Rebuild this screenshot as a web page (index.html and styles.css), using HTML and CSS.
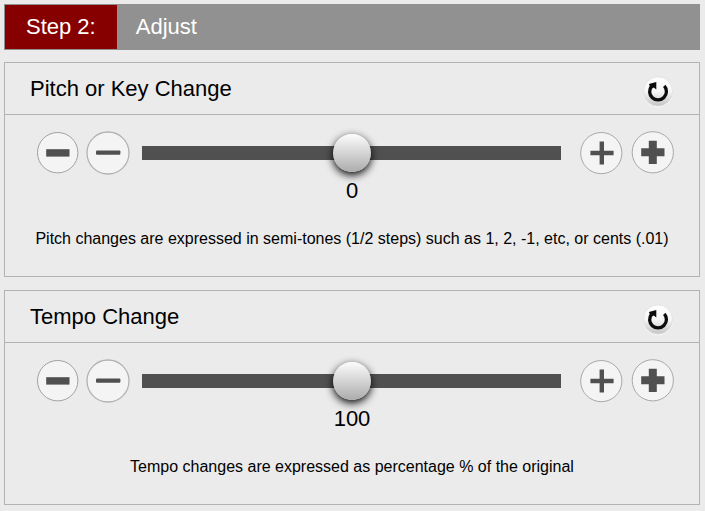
FILE: index.html
```html
<!DOCTYPE html>
<html lang="en">
<head>
    <meta charset="UTF-8">
    <meta name="viewport" content="width=device-width, initial-scale=1.0">
    <title>Adjust Pitch and Tempo</title>
    <link rel="stylesheet" href="styles.css">
</head>
<body>
    <!-- Shared icons -->
    <svg class="icon-defs" aria-hidden="true">
        <defs>
            <linearGradient id="resetFill" x1="0" y1="0" x2="0" y2="1">
                <stop offset="0" stop-color="#ffffff"/>
                <stop offset="0.5" stop-color="#f6f6f6"/>
                <stop offset="1" stop-color="#c4c4c4"/>
            </linearGradient>
        </defs>
        <symbol id="minusBold" viewBox="0 0 42 42">
            <circle cx="20.7" cy="20.7" r="20.2" fill="#f4f4f4" stroke="#a0a0a0"/>
            <rect x="9.2" y="17.2" width="23.3" height="7.4" fill="#505050"/>
        </symbol>
        <symbol id="minusThin" viewBox="0 0 42 42">
            <circle cx="21" cy="21" r="21" fill="#f4f4f4" stroke="#b2b2b2" stroke-width="1.3"/>
            <rect x="9" y="18.4" width="24.4" height="4.4" rx="1" fill="#505050"/>
        </symbol>
        <symbol id="plusThin" viewBox="0 0 42 42">
            <circle cx="21.3" cy="21.1" r="20.6" fill="#f4f4f4" stroke="#a8a8a8"/>
            <path d="M19.6 9.6h4.4v9.2h9.6v4.4h-9.6v9.2h-4.4v-9.2h-9.2v-4.4h9.2z" fill="#505050"/>
        </symbol>
        <symbol id="plusBold" viewBox="0 0 42 42">
            <circle cx="20.8" cy="20.3" r="20.6" fill="#f4f4f4" stroke="#a8a8a8"/>
            <path d="M16.8 8.7h8v7.6h7.7v8h-7.7v7.6h-8v-7.6h-7.6v-8h7.6z" fill="#505050"/>
        </symbol>
        <symbol id="reset" viewBox="0 0 32 32">
            <circle cx="16" cy="16.3" r="15.2" fill="#f3f3f3"/>
            <circle cx="16" cy="15.4" r="14.6" fill="url(#resetFill)" stroke="#dadada" stroke-width="0.7"/>
            <path d="M22.3 9.9A8.4 8.4 0 1 1 9.6 10.1" fill="none" stroke="#0c0c0c" stroke-width="3.3"/>
            <path d="M6.9 8.1L14.3 6V13.4L11.8 11.4L9 13z" fill="#0c0c0c"/>
        </symbol>
    </svg>

    <header class="step-bar">
        <span class="step-number">Step 2:</span>
        <span class="step-title">Adjust</span>
    </header>

    <section class="panel">
        <div class="panel-header">
            <label class="panel-title" for="pitch">Pitch or Key Change</label>
            <button class="reset-btn" data-target="pitch" data-value="0" aria-label="Reset pitch"><svg><use href="#reset"/></svg></button>
        </div>
        <div class="panel-body">
            <div class="controls">
                <div class="buttons buttons-down">
                    <button class="round-btn" data-target="pitch" data-step="-1" aria-label="Pitch down"><svg><use href="#minusBold"/></svg></button>
                    <button class="round-btn" data-target="pitch" data-step="-0.01" aria-label="Pitch down slightly"><svg><use href="#minusThin"/></svg></button>
                </div>
                <input type="range" class="slider" id="pitch" min="-12" max="12" step="0.01" value="0">
                <div class="buttons buttons-up">
                    <button class="round-btn" data-target="pitch" data-step="0.01" aria-label="Pitch up slightly"><svg><use href="#plusThin"/></svg></button>
                    <button class="round-btn" data-target="pitch" data-step="1" aria-label="Pitch up"><svg><use href="#plusBold"/></svg></button>
                </div>
            </div>
            <output class="value" id="pitchValue" for="pitch">0</output>
            <p class="note">Pitch changes are expressed in semi-tones (1/2 steps) such as 1, 2, -1, etc, or cents (.01)</p>
        </div>
    </section>

    <section class="panel">
        <div class="panel-header">
            <label class="panel-title" for="tempo">Tempo Change</label>
            <button class="reset-btn" data-target="tempo" data-value="100" aria-label="Reset tempo"><svg><use href="#reset"/></svg></button>
        </div>
        <div class="panel-body">
            <div class="controls">
                <div class="buttons buttons-down">
                    <button class="round-btn" data-target="tempo" data-step="-10" aria-label="Tempo down"><svg><use href="#minusBold"/></svg></button>
                    <button class="round-btn" data-target="tempo" data-step="-1" aria-label="Tempo down slightly"><svg><use href="#minusThin"/></svg></button>
                </div>
                <input type="range" class="slider" id="tempo" min="0" max="200" value="100">
                <div class="buttons buttons-up">
                    <button class="round-btn" data-target="tempo" data-step="1" aria-label="Tempo up slightly"><svg><use href="#plusThin"/></svg></button>
                    <button class="round-btn" data-target="tempo" data-step="10" aria-label="Tempo up"><svg><use href="#plusBold"/></svg></button>
                </div>
            </div>
            <output class="value" id="tempoValue" for="tempo">100</output>
            <p class="note">Tempo changes are expressed as percentage % of the original</p>
        </div>
    </section>

    <script src="script.js"></script>
</body>
</html>
```

FILE: styles.css
```css
body {
    margin: 4px 5px 6px 4px;
    background-color: #ebebeb;
    color: #000;
    font-family: Arial, "Liberation Sans", sans-serif;
    font-size: 16px;
}

button {
    padding: 0;
    border: none;
    border-radius: 50%;
    background: none;
    cursor: pointer;
}

button svg {
    display: block;
    width: 100%;
    height: 100%;
}

.icon-defs {
    position: absolute;
    width: 0;
    height: 0;
}

.step-bar {
    display: flex;
    border: 1px solid #919191;
    background-color: #919191;
    color: #fff;
    font-size: 22px;
    line-height: 44px;
}

.step-number {
    padding: 0 21px;
    background-color: #870000;
}

.step-title {
    padding: 0 19px;
}

.panel {
    margin-top: 12px;
    border: 1px solid #b2b2b2;
}

.panel + .panel {
    margin-top: 13px;
}

.panel-header {
    display: flex;
    justify-content: space-between;
    align-items: center;
    padding: 0 25px;
    border-bottom: 1px solid #b2b2b2;
    font-size: 22px;
    line-height: 51px;
}

.reset-btn {
    width: 32px;
    height: 32px;
    margin-top: 6px;
}

.panel-body {
    padding: 17px 0 28px;
    text-align: center;
}

.controls {
    display: flex;
    align-items: center;
    padding: 0 25px 0 32px;
}

.buttons {
    display: flex;
}

.buttons-down {
    gap: 8px;
    margin-right: 13px;
}

.buttons-up {
    gap: 10px;
    margin-left: 19px;
}

.round-btn {
    width: 42px;
    height: 42px;
}

.round-btn svg,
.round-btn use,
symbol {
    overflow: visible;
}

.slider {
    flex: 1;
    min-width: 0;
    height: 38px;
    margin: 0;
    background: none;
    appearance: none;
    -webkit-appearance: none;
}

.slider::-webkit-slider-runnable-track {
    height: 14px;
    background-color: #505050;
}

.slider::-webkit-slider-thumb {
    -webkit-appearance: none;
    width: 38px;
    height: 38px;
    margin-top: -12px;
    border-radius: 50%;
    background: linear-gradient(#fcfcfc, #acacac);
    box-shadow: 0 3px 8px #000;
    cursor: pointer;
}

.value {
    display: block;
    margin-top: 5px;
    font-size: 22px;
    line-height: 24px;
}

.note {
    margin: 27px 0 0;
    line-height: 18px;
}
```

FILE: script.js
```js
function update(slider) {
    document.getElementById(slider.id + 'Value').textContent = Number(slider.value);
}

document.querySelectorAll('.slider').forEach(slider => {
    slider.addEventListener('input', () => update(slider));
});

document.querySelectorAll('.round-btn').forEach(button => {
    button.addEventListener('click', () => {
        const slider = document.getElementById(button.dataset.target);
        slider.value = Number(slider.value) + Number(button.dataset.step);
        update(slider);
    });
});

document.querySelectorAll('.reset-btn').forEach(button => {
    button.addEventListener('click', () => {
        const slider = document.getElementById(button.dataset.target);
        slider.value = button.dataset.value;
        update(slider);
    });
});
```
